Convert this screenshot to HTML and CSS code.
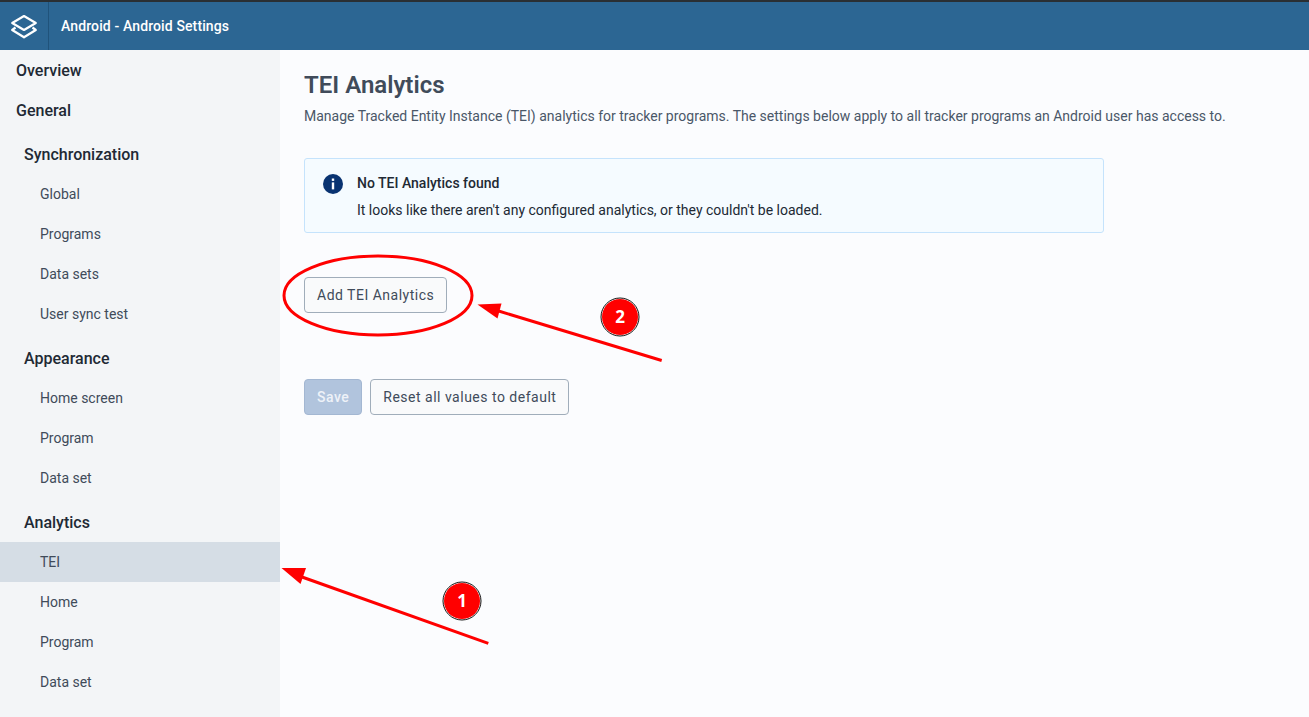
FILE: index.html
```html
<!DOCTYPE html>
<html lang="en">
<head>
<meta charset="utf-8">
<title>Android Settings</title>
<link rel="stylesheet" href="styles.css">
</head>
<body>
<div class="app">
  <header class="topbar">
    <div class="logo">
      <svg width="28" height="26" viewBox="0 0 28 26" fill="none" stroke="#fff" stroke-width="2.200" stroke-linejoin="round">
        <path d="M14 3 L25.800 10 L14 17 L2.200 10 Z"/>
        <path d="M5.500 14.500 L2.200 17 L14 24.300 L25.800 17 L22.500 14.500"/>
      </svg>
    </div>
    <div class="app-title">Android - Android Settings</div>
  </header>
  <div class="body">
    <nav class="sidebar">
      <a class="item top">Overview</a>
      <a class="item top">General</a>
      <a class="item group">Synchronization</a>
      <a class="item sub">Global</a>
      <a class="item sub">Programs</a>
      <a class="item sub">Data sets</a>
      <a class="item sub">User sync test</a>
      <a class="item group">Appearance</a>
      <a class="item sub">Home screen</a>
      <a class="item sub">Program</a>
      <a class="item sub">Data set</a>
      <a class="item group">Analytics</a>
      <a class="item sub active">TEI</a>
      <a class="item sub">Home</a>
      <a class="item sub">Program</a>
      <a class="item sub">Data set</a>
    </nav>
    <main class="content">
      <h1 class="title">TEI Analytics</h1>
      <p class="desc">Manage Tracked Entity Instance (TEI) analytics for tracker programs. The settings below apply to all tracker programs an Android user has access to.</p>
      <section class="notice">
        <svg class="notice-icon" width="20" height="20" viewBox="0 0 20 20">
          <circle cx="10" cy="10" r="10" fill="#093371"/>
          <rect x="8.800" y="4.500" width="2.400" height="2.400" fill="#fff"/>
          <rect x="8.800" y="8.400" width="2.400" height="7" fill="#fff"/>
        </svg>
        <div>
          <div class="notice-title">No TEI Analytics found</div>
          <div class="notice-text">It looks like there aren't any configured analytics, or they couldn't be loaded.</div>
        </div>
      </section>
      <div class="add-row"><button class="btn">Add TEI Analytics</button></div>
      <div class="actions">
        <button class="btn primary" disabled>Save</button>
        <button class="btn">Reset all values to default</button>
      </div>
    </main>
  </div>
  <svg class="marks" width="1309" height="717" viewBox="0 0 1309 717" fill="none">
    <ellipse cx="378" cy="295.500" rx="94" ry="39.500" stroke="#f00" stroke-width="3"/>
    <path d="M488.300 643.300 L302 577" stroke="#f00" stroke-width="3"/>
    <path d="M281.500 568 L306 568 L300.500 584 Z" fill="#f00"/>
    <path d="M661.700 360.500 L497 310.500" stroke="#f00" stroke-width="3"/>
    <path d="M477.500 304.500 L501.500 303.500 L497.500 318.500 Z" fill="#f00"/>
    <circle cx="462" cy="601" r="18.500" fill="#f00" stroke="#fff" stroke-width="1"/>
    <circle cx="462" cy="601" r="19" stroke="#111" stroke-width="1"/>
    <circle cx="620" cy="317" r="18.500" fill="#f00" stroke="#fff" stroke-width="1"/>
    <circle cx="620" cy="317" r="19" stroke="#111" stroke-width="1"/>
    <text class="mark-num" x="462" y="607" text-anchor="middle">1</text>
    <text class="mark-num" x="620" y="323" text-anchor="middle">2</text>
  </svg>
</div>
</body>
</html>
```
FILE: styles.css
```css
* { box-sizing: border-box; }
html, body { margin: 0; height: 100%; overflow: hidden; }
body { font-family: Roboto, "Liberation Sans", sans-serif; color: #212934; background: #fbfcfe; }
.app { position: relative; width: 1309px; height: 717px; display: flex; flex-direction: column; }
.topbar { height: 50px; flex: none; display: flex; align-items: stretch; background: #2c6693; border-top: 2px solid #2a2f33; color: #fff; }
.logo { width: 49px; display: flex; align-items: center; justify-content: center; border-right: 1px solid #20537b; }
.app-title { padding-left: 12px; display: flex; align-items: center; font-size: 14px; font-weight: 500; letter-spacing: 0.12px; }
.body { flex: 1; display: flex; min-height: 0; }
.sidebar { width: 280px; flex: none; background: #f3f5f7; display: flex; flex-direction: column; }
.item { display: flex; align-items: center; color: #212934; }
.top { height: 40px; padding-left: 16px; font-size: 16px; font-weight: 500; }
.group { height: 44px; padding-left: 24px; padding-top: 4px; font-size: 16px; font-weight: 500; }
.sub { height: 40px; padding-left: 40px; font-size: 14px; color: #404b5a; }
.active { background: #d5dde5; }
.content { flex: 1; padding: 20px 24px; }
.title { margin: 0; font-size: 24px; line-height: 30px; font-weight: 600; color: #404b5a; }
.desc { margin: 6px 0 0; font-size: 14px; line-height: 20px; color: #4a5768; }
.notice { width: 800px; height: 75px; margin-top: 32px; padding: 14px 18px; display: flex; gap: 14px; background: #f5fbff; border: 1px solid #c5e3fc; border-radius: 3px; }
.notice-icon { flex: none; margin-top: 1px; }
.notice-title { font-size: 14px; line-height: 20px; font-weight: 500; color: #212934; }
.notice-text { margin-top: 7px; font-size: 14px; line-height: 20px; color: #212934; }
.add-row { margin-top: 44px; }
.actions { margin-top: 66px; display: flex; gap: 8px; }
.btn { height: 36px; padding: 0 12px; font-family: inherit; font-size: 14px; letter-spacing: 0.5px; color: #404b5a; background: #f9fafb; border: 1px solid #a0adba; border-radius: 4px; }
.primary { font-weight: 500; color: #eef2f8; background: #b1c4dd; border-color: #a3b7d2; }
.marks { position: absolute; left: 0; top: 0; pointer-events: none; }
.mark-num { font-family: "Open Sans", sans-serif; font-size: 17px; font-weight: 700; fill: #fff; }
```
